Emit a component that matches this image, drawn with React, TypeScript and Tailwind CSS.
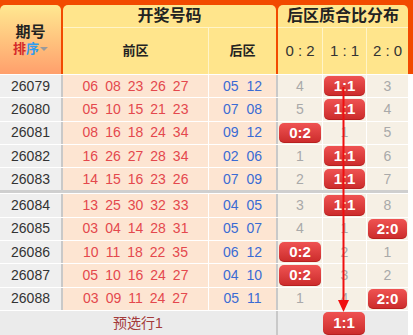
import React from 'react';

type Row = { id: string; front: string[]; back: string[]; dist: string[] };

const groups: Row[][] = [
  [
    { id: '26079', front: ['06', '08', '23', '26', '27'], back: ['05', '12'], dist: ['4', '1:1', '3'] },
    { id: '26080', front: ['05', '10', '15', '21', '23'], back: ['07', '08'], dist: ['5', '1:1', '4'] },
    { id: '26081', front: ['08', '16', '18', '24', '34'], back: ['09', '12'], dist: ['0:2', '1', '5'] },
    { id: '26082', front: ['16', '26', '27', '28', '34'], back: ['02', '06'], dist: ['1', '1:1', '6'] },
    { id: '26083', front: ['14', '15', '16', '23', '26'], back: ['07', '09'], dist: ['2', '1:1', '7'] },
  ],
  [
    { id: '26084', front: ['13', '25', '30', '32', '33'], back: ['04', '05'], dist: ['3', '1:1', '8'] },
    { id: '26085', front: ['03', '04', '14', '28', '31'], back: ['05', '07'], dist: ['4', '1', '2:0'] },
    { id: '26086', front: ['10', '11', '18', '22', '35'], back: ['06', '12'], dist: ['0:2', '2', '1'] },
    { id: '26087', front: ['05', '10', '16', '24', '27'], back: ['04', '10'], dist: ['0:2', '3', '2'] },
    { id: '26088', front: ['03', '09', '11', '24', '27'], back: ['05', '11'], dist: ['1', '4', '2:0'] },
  ],
];

const Badge: React.FC<{ text: string }> = ({ text }) => (
  <div className="m-[1px] flex-1 self-stretch rounded-[5px] bg-linear-to-b from-[#ef5252] to-[#cb2a2a] text-white font-bold text-[15px] flex items-center justify-center shadow-[inset_0_-1px_0_rgba(120,0,0,0.25)]">
    {text}
  </div>
);

const DistCell: React.FC<{ value: string; className: string }> = ({ value, className }) => (
  <div className={`${className} flex items-center justify-center text-[14px] text-[#a9a9a9]`}>
    {value.includes(':') ? <Badge text={value} /> : value}
  </div>
);

const distCls = [
  'w-[46px] border-l-2 border-[#c9c9c9]',
  'w-[44px] border-l border-white',
  'w-[42px] border-l border-white',
];

const DataRow: React.FC<{ row: Row }> = ({ row }) => (
  <div className="flex h-[23.3px] border-t border-white">
    <div className="w-[63px] border-r-2 border-[#c9c9c9] bg-[#efefef] text-[#333] text-[14px] flex items-center justify-center">
      {row.id}
    </div>
    <div className="w-[145px] bg-[#fde5d2] text-[#e4484d] text-[14px] flex items-center justify-center gap-[7px]">
      {row.front.map((n, i) => (
        <span key={i}>{n}</span>
      ))}
    </div>
    <div className="w-[68px] border-l border-white bg-[#fde5d2] text-[#3a6bd4] text-[14px] flex items-center justify-center gap-[8px]">
      {row.back.map((n, i) => (
        <span key={i}>{n}</span>
      ))}
    </div>
    <div className="flex bg-[#f6f0e5]">
      {row.dist.map((d, i) => (
        <DistCell key={i} value={d} className={distCls[i]} />
      ))}
    </div>
  </div>
);

export default function App() {
  return (
    <div
      className="relative w-[413px] h-[335px] overflow-hidden bg-white"
      style={{ fontFamily: '"Liberation Sans", Arial, "Noto Sans CJK SC", sans-serif' }}
    >
      {/* header */}
      <div className="flex h-[74px] bg-[#f24a00] pt-[5px]">
        <div className="w-[61px] rounded-t-[5px] bg-linear-to-b from-[#ffe891] to-[#ff9f6c] flex flex-col items-center justify-center gap-[3px]">
          <div className="font-bold text-[15px] text-[#222] leading-none">期号</div>
          <div className="flex items-center text-[13px] font-bold leading-none">
            <span className="text-[#d42a2a]">排</span>
            <span className="text-[#2f9cf0]">序</span>
            <span className="ml-[1px] border-x-[4px] border-t-[4px] border-x-transparent border-t-[#9a9a9a]" />
          </div>
        </div>
        <div className="ml-[2px] w-[213px] rounded-t-[5px] bg-[#ffe58c] flex flex-col">
          <div className="h-[22px] flex items-center justify-center font-bold text-[16px] text-[#222]">开奖号码</div>
          <div className="flex flex-1 border-t border-[#fff4c8] text-[13px] font-bold text-[#222]">
            <div className="w-[145px] flex items-center justify-center">前区</div>
            <div className="flex-1 border-l border-[#fff4c8] flex items-center justify-center">后区</div>
          </div>
        </div>
        <div className="ml-[2px] w-[130px] rounded-t-[5px] bg-[#ffe58c] flex flex-col">
          <div className="h-[22px] flex items-center justify-center font-bold text-[16px] text-[#222]">后区质合比分布</div>
          <div className="flex flex-1 border-t border-[#fff4c8] text-[15px] text-[#333]">
            <div className="w-[44px] flex items-center justify-center">0 : 2</div>
            <div className="w-[44px] border-l border-[#fff4c8] flex items-center justify-center">1 : 1</div>
            <div className="flex-1 border-l border-[#fff4c8] flex items-center justify-center">2 : 0</div>
          </div>
        </div>
      </div>

      {/* body */}
      <div className="w-[408px]">
        {groups.map((g, gi) => (
          <div key={gi} className={gi > 0 ? 'border-t-[3px] border-[#cfcfcf]' : ''}>
            {g.map((r) => (
              <DataRow key={r.id} row={r} />
            ))}
          </div>
        ))}

        {/* footer */}
        <div className="flex h-[26px] bg-[#ebebeb] border-t border-white">
          <div className="w-[276px] flex items-center justify-center text-[14px] text-[#a33a3a]">预选行1</div>
          <div className="w-[46px] border-l-2 border-[#c9c9c9]" />
          <div className="w-[44px] flex items-center justify-center">
            <Badge text="1:1" />
          </div>
          <div className="w-[42px]" />
        </div>
      </div>

      {/* trend line */}
      <svg className="absolute left-0 top-0 pointer-events-none" width={413} height={335}>
        <line x1={343.5} y1={87} x2={343.5} y2={304} stroke="#f01010" strokeWidth={2} />
        <polygon points="338,300 349,300 343.5,312" fill="#f01010" />
      </svg>
    </div>
  );
}
